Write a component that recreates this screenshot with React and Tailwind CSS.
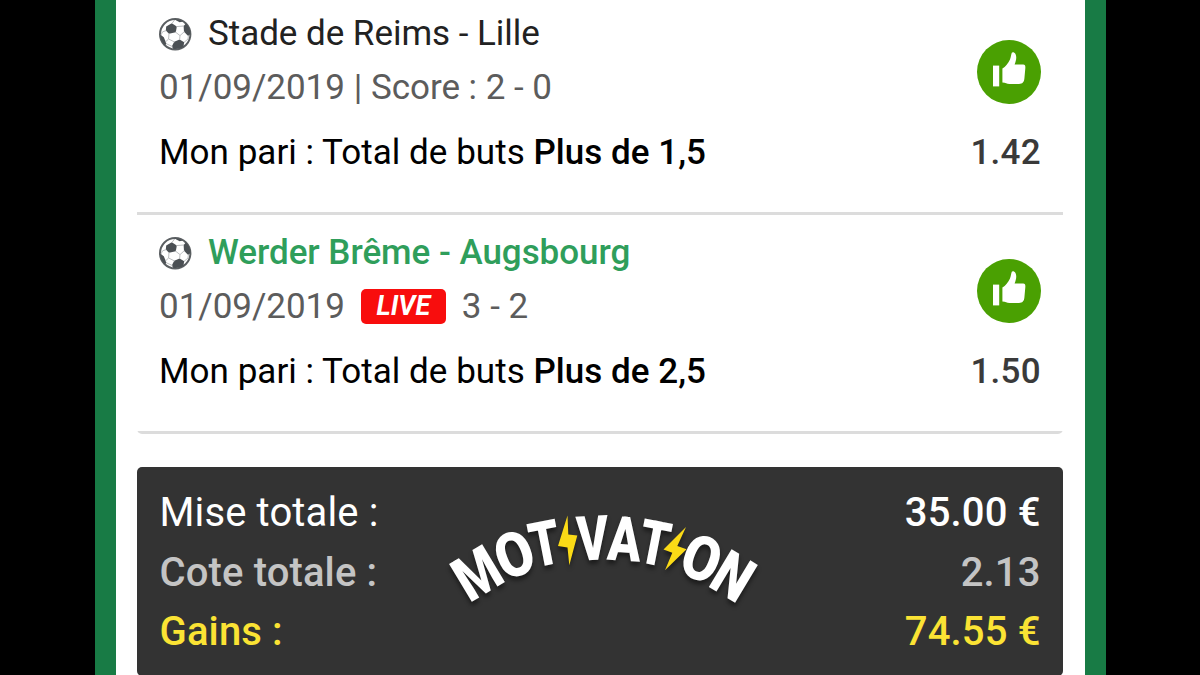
import React from 'react';

const BETS = [
    {
        id: 'reims-lille',
        match: 'Stade de Reims - Lille',
        date: '01/09/2019',
        live: false,
        score: '| Score : 2 - 0',
        label: 'Mon pari : Total de buts',
        pick: 'Plus de 1,5',
        odds: '1.42'
    },
    {
        id: 'werder-augsbourg',
        match: 'Werder Brême - Augsbourg',
        date: '01/09/2019',
        live: true,
        score: '3 - 2',
        label: 'Mon pari : Total de buts',
        pick: 'Plus de 2,5',
        odds: '1.50'
    }
];

// Letters of the arched logo: centre point, tilt and horizontal squeeze of each one
const ARC_LETTERS = [
    { char: 'M', x: 47, y: 83, angle: -31, squeeze: 0.81 },
    { char: 'O', x: 84.2, y: 64.2, angle: -21, squeeze: 0.88 },
    { char: 'T', x: 114.8, y: 53.2, angle: -11, squeeze: 0.78 },
    { char: 'V', x: 162.6, y: 48, angle: -3, squeeze: 0.78 },
    { char: 'A', x: 194.6, y: 48.8, angle: 4, squeeze: 0.79 },
    { char: 'T', x: 224.7, y: 52.7, angle: 11, squeeze: 0.78 },
    { char: 'O', x: 271.7, y: 68.2, angle: 21, squeeze: 0.88 },
    { char: 'N', x: 303.3, y: 86, angle: 31, squeeze: 0.83 }
];

function SoccerBall() {
    return (
        <svg className="h-[33px] w-[33px] shrink-0" viewBox="0 0 33 33" fill="none">
            <circle cx="16.2" cy="16.2" r="15.2" fill="#fff" stroke="#5b5f62" strokeWidth="2" />
            <g fill="#4b5054">
                <path d="M7.2 8.4 L12.8 5.2 L17.8 8.4 L16.8 14.2 L10 15.8 L6.8 12.6 Z" />
                <path d="M24.6 8 L27 5.6 Q31.2 10 31.4 16 L29.2 18 L25 13.8 Z" />
                <path d="M15.2 23.8 L20.6 21.6 L25.2 24.2 L24.4 29 Q20 31.6 14.4 30.9 L12.8 28.4 Z" />
                <path d="M1.2 16.6 L4.8 19.2 L7.4 25.6 L6 27.4 Q1.4 23 1.2 16.6 Z" />
                <path d="M15.6 1.4 Q20.4 1.2 24 3.4 L20.6 4.2 Z" />
            </g>
            <path
                d="M12.8 5.6 L15.6 2 M17.4 8.6 L25 8 M16.4 14 L21 17.6 L25.4 13.6 M21 17.6 L20.6 21.8 M10 15.4 L9.6 21 L15.6 24 M9.6 21 L6.4 24 M7.2 12.6 L3.6 13.8 L2 17 M25 24.4 L29 21 L29.4 17.6 M7 25.6 L13.6 28.6"
                stroke="#b4b7b9"
                strokeWidth="0.9"
            />
        </svg>
    );
}

function WonBadge() {
    return (
        <svg className="h-16 w-16" viewBox="0 0 64 64">
            <circle cx="32" cy="32" r="32" fill="#4aa002" />
            <path d="M16 25.6 H22.2 V46.4 H16 Z" fill="#fff" />
            <path
                d="M25.4 28.6 C28.5 26.5 31.2 23.2 33 19.4 C34.1 17 34 14.6 34.8 12.8 C35.4 11.6 37.6 12.2 38.5 14 C39.9 16.8 39.2 20.4 37.6 24.6 H46.2 C48.2 24.7 48.5 26 48.3 28.4 L47.4 38.5 C47 42.3 45.5 43.8 42 43.9 H32.5 C29.5 43.9 28.8 42.6 25.4 42.4 Z"
                fill="#fff"
            />
        </svg>
    );
}

function MotivationLogo() {
    return (
        <svg
            className="absolute left-[293px] top-[23.5px] h-[130px] w-[350px] drop-shadow-[0_4px_2px_rgba(0,0,0,0.45)]"
            viewBox="0 0 350 130"
        >
            <g fill="#fff" fontFamily="Roboto, sans-serif" fontWeight="900" fontSize="62" textAnchor="middle">
                {ARC_LETTERS.map((l, i) => (
                    <text
                        key={i}
                        transform={`translate(${l.x} ${l.y}) rotate(${l.angle}) scale(${l.squeeze} 1)`}
                        y="22"
                    >
                        {l.char}
                    </text>
                ))}
            </g>
            <g fill="#fbdb16">
                <path d="M137.5 25.5 L128 56 L137.5 57.5 L139.3 75.3 L147.3 45.5 L138.3 44.5 Z" />
                <path d="M256 37 L233.5 59.5 L242.3 62.7 L235 80.3 L256.5 59.3 L247.3 56 Z" />
            </g>
        </svg>
    );
}

function BetRow({ bet }) {
    return (
        <div className="flex h-[219px] justify-between border-b-[3px] border-[#dcdcdc] px-[22px]">
            <div className="pt-[13px] text-[35px] tracking-[-0.04px]">
                <div className="flex h-[50px] items-center gap-4">
                    <SoccerBall />
                    <span className={bet.live ? 'font-medium text-[#2f9e5b]' : 'text-[#222]'}>{bet.match}</span>
                </div>
                <div className="flex h-[59px] items-center text-[#5c5c5c]">
                    <span>{bet.date}</span>
                    {bet.live && (
                        <span className="mx-4 mb-0.5 flex h-[35px] w-[85px] items-center justify-center rounded-[5px] bg-[#f80d0d] text-[27px] font-bold italic text-white">
                            LIVE
                        </span>
                    )}
                    <span className={bet.live ? '' : 'ml-[9px]'}>{bet.score}</span>
                </div>
                <div className="flex h-[70px] items-center whitespace-pre tracking-[0.03px] text-black">
                    <span>{bet.label} </span>
                    <span className="font-medium">{bet.pick}</span>
                </div>
            </div>
            <div className="flex flex-col items-end pt-[44px]">
                <WonBadge />
                <span className="mt-[23px] text-[35px] font-medium leading-[52px] tracking-[0.3px] text-[#3a3a3a]">
                    {bet.odds}
                </span>
            </div>
        </div>
    );
}

function TotalLine({ label, value, className }) {
    return (
        <div className={`flex h-[59.5px] items-center justify-between ${className}`}>
            <span>{label}</span>
            <span className="font-medium">{value}</span>
        </div>
    );
}

export default function App() {
    return (
        <div className="flex h-[675px] w-[1200px] justify-center overflow-hidden bg-black font-[Roboto,sans-serif]">
            <div className="h-full w-[1011px] border-x-[21px] border-[#187b45] bg-white px-[21.5px]">
                <div className="-mt-1 overflow-hidden rounded-b-[5px]">
                    {BETS.map((bet) => (
                        <BetRow key={bet.id} bet={bet} />
                    ))}
                </div>
                <div className="relative mt-[32.5px] h-[209px] rounded-[5px] bg-[#333] px-[22.5px] pt-[17px] text-[40px] tracking-[0.13px]">
                    <TotalLine label="Mise totale :" value="35.00 €" className="text-white" />
                    <TotalLine label="Cote totale :" value="2.13" className="font-medium text-[#c4c4c4]" />
                    <TotalLine label="Gains :" value="74.55 €" className="font-medium text-[#fbe334]" />
                    <MotivationLogo />
                </div>
            </div>
        </div>
    );
}
